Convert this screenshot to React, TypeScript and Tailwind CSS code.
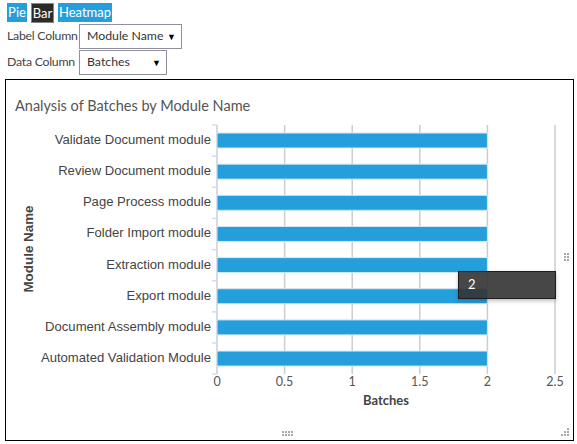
import React from 'react';

const MODULES = [
  'Validate Document module',
  'Review Document module',
  'Page Process module',
  'Folder Import module',
  'Extraction module',
  'Export module',
  'Document Assembly module',
  'Automated Validation Module',
];

const TICKS = ['0', '0.5', '1', '1.5', '2', '2.5'];

// offsets are relative to the chart box's padding edge
const PLOT_LEFT = 211;
const TICK_STEP = 67.6;
const ROW_TOP = 45;
const ROW_STEP = 31.15;

function Grip({ cols, rows, corner = false }: { cols: number; rows: number; corner?: boolean }) {
  const dots = [];
  for (let r = 0; r < rows; r++) {
    for (let c = 0; c < cols; c++) {
      // the resize corner is a staircase, not a full block
      if (corner && c + r < cols - 1) continue;
      dots.push(<rect key={`${r}-${c}`} x={c * 3} y={r * 3} width="2" height="2" fill="#a8a8a8" />);
    }
  }
  return (
    <svg width={cols * 3} height={rows * 3} className="block">
      {dots}
    </svg>
  );
}

function Chart() {
  return (
    <svg width="567" height="360" className="block">
      <text x="9" y="31" fontSize="14.5" fill="#555" fontFamily="'Lato', sans-serif">
        Analysis of Batches by Module Name
      </text>

      {TICKS.map((t, i) => {
        const x = PLOT_LEFT + i * TICK_STEP;
        return (
          <g key={t}>
            <line x1={x} x2={x} y1="45" y2="294" stroke={i === 0 ? '#d2dbe6' : '#cccccc'} strokeWidth={i === 0 ? 2 : 1.5} />
            <text x={x} y="306" textAnchor="middle" fontSize="12.5" fill="#555" fontFamily="'Lato', sans-serif">
              {t}
            </text>
          </g>
        );
      })}

      {MODULES.map((m, i) => {
        const y = ROW_TOP + i * ROW_STEP;
        return (
          <g key={m}>
            <line x1={PLOT_LEFT - 5} x2={PLOT_LEFT} y1={y} y2={y} stroke="#d2dbe6" strokeWidth="1.5" />
            <rect x={PLOT_LEFT} y={y + 8} width={TICK_STEP * 4} height="15" fill="#259fdc" stroke="#d5e8f4" strokeWidth="1" />
            <text x={PLOT_LEFT - 6} y={y + 19} textAnchor="end" fontSize="13.1" fill="#444" fontFamily="'Liberation Sans', sans-serif">
              {m}
            </text>
          </g>
        );
      })}
      <line x1={PLOT_LEFT - 5} x2={PLOT_LEFT} y1="294" y2="294" stroke="#d2dbe6" strokeWidth="1.5" />

      <text x="380" y="325" textAnchor="middle" fontSize="13" fontWeight="700" fill="#444" fontFamily="'Lato', sans-serif">
        Batches
      </text>
      <text
        transform="translate(27 169) rotate(-90)"
        textAnchor="middle"
        fontSize="13.4"
        fontWeight="700"
        fill="#444"
        fontFamily="'Liberation Sans', sans-serif"
      >
        Module Name
      </text>
    </svg>
  );
}

function SelectBox({ label, width }: { label: string; width: string }) {
  return (
    <div className={`flex h-[25px] items-center justify-between border border-[#8f8f9d] pl-[7px] pr-[5px] ${width}`}>
      <span className="text-[#333]">{label}</span>
      <span className="text-[9px] leading-none text-black">▼</span>
    </div>
  );
}

export default function App() {
  return (
    <div className="h-[444px] w-[577px] overflow-hidden whitespace-nowrap bg-white pt-[3px] font-['Lato',sans-serif] text-[12.3px] text-[#444]">
      <div className="flex gap-[4px] pl-[7px] text-[13px]">
        <button className="h-[19px] w-[20px] bg-[#259fdc] text-center leading-[19px] text-white">Pie</button>
        <button className="h-[20px] w-[23px] border border-[#888] bg-[#2b2b2b] text-center leading-[18px] text-white">Bar</button>
        <button className="h-[19px] w-[54px] bg-[#259fdc] text-center leading-[19px] text-white">Heatmap</button>
      </div>
      <div className="mt-[1px] flex items-center pl-[7px]">
        <span className="w-[72px] tracking-[-0.25px]">Label Column</span>
        <SelectBox label="Module Name" width="w-[103px]" />
      </div>
      <div className="mt-[1px] flex items-center pl-[7px]">
        <span className="w-[72px] tracking-[-0.25px]">Data Column</span>
        <SelectBox label="Batches" width="w-[88px]" />
      </div>

      <div className="relative ml-[5px] mt-[4px] h-[362px] w-[569px] border border-black">
        <Chart />

        <div className="absolute left-[452px] top-[191px] flex h-[28px] w-[98px] items-center border border-[#1c1c1c] bg-[#333333]/90 pl-[9px] text-[13px] text-white shadow-[0_2px_4px_rgba(0,0,0,0.25)]">
          2
        </div>

        <div className="absolute right-[3px] top-[173px]">
          <Grip cols={2} rows={3} />
        </div>
        <div className="absolute bottom-[3px] left-[276px]">
          <Grip cols={4} rows={2} />
        </div>
        <div className="absolute bottom-[3px] right-[3px]">
          <Grip cols={3} rows={3} corner />
        </div>
      </div>
    </div>
  );
}
